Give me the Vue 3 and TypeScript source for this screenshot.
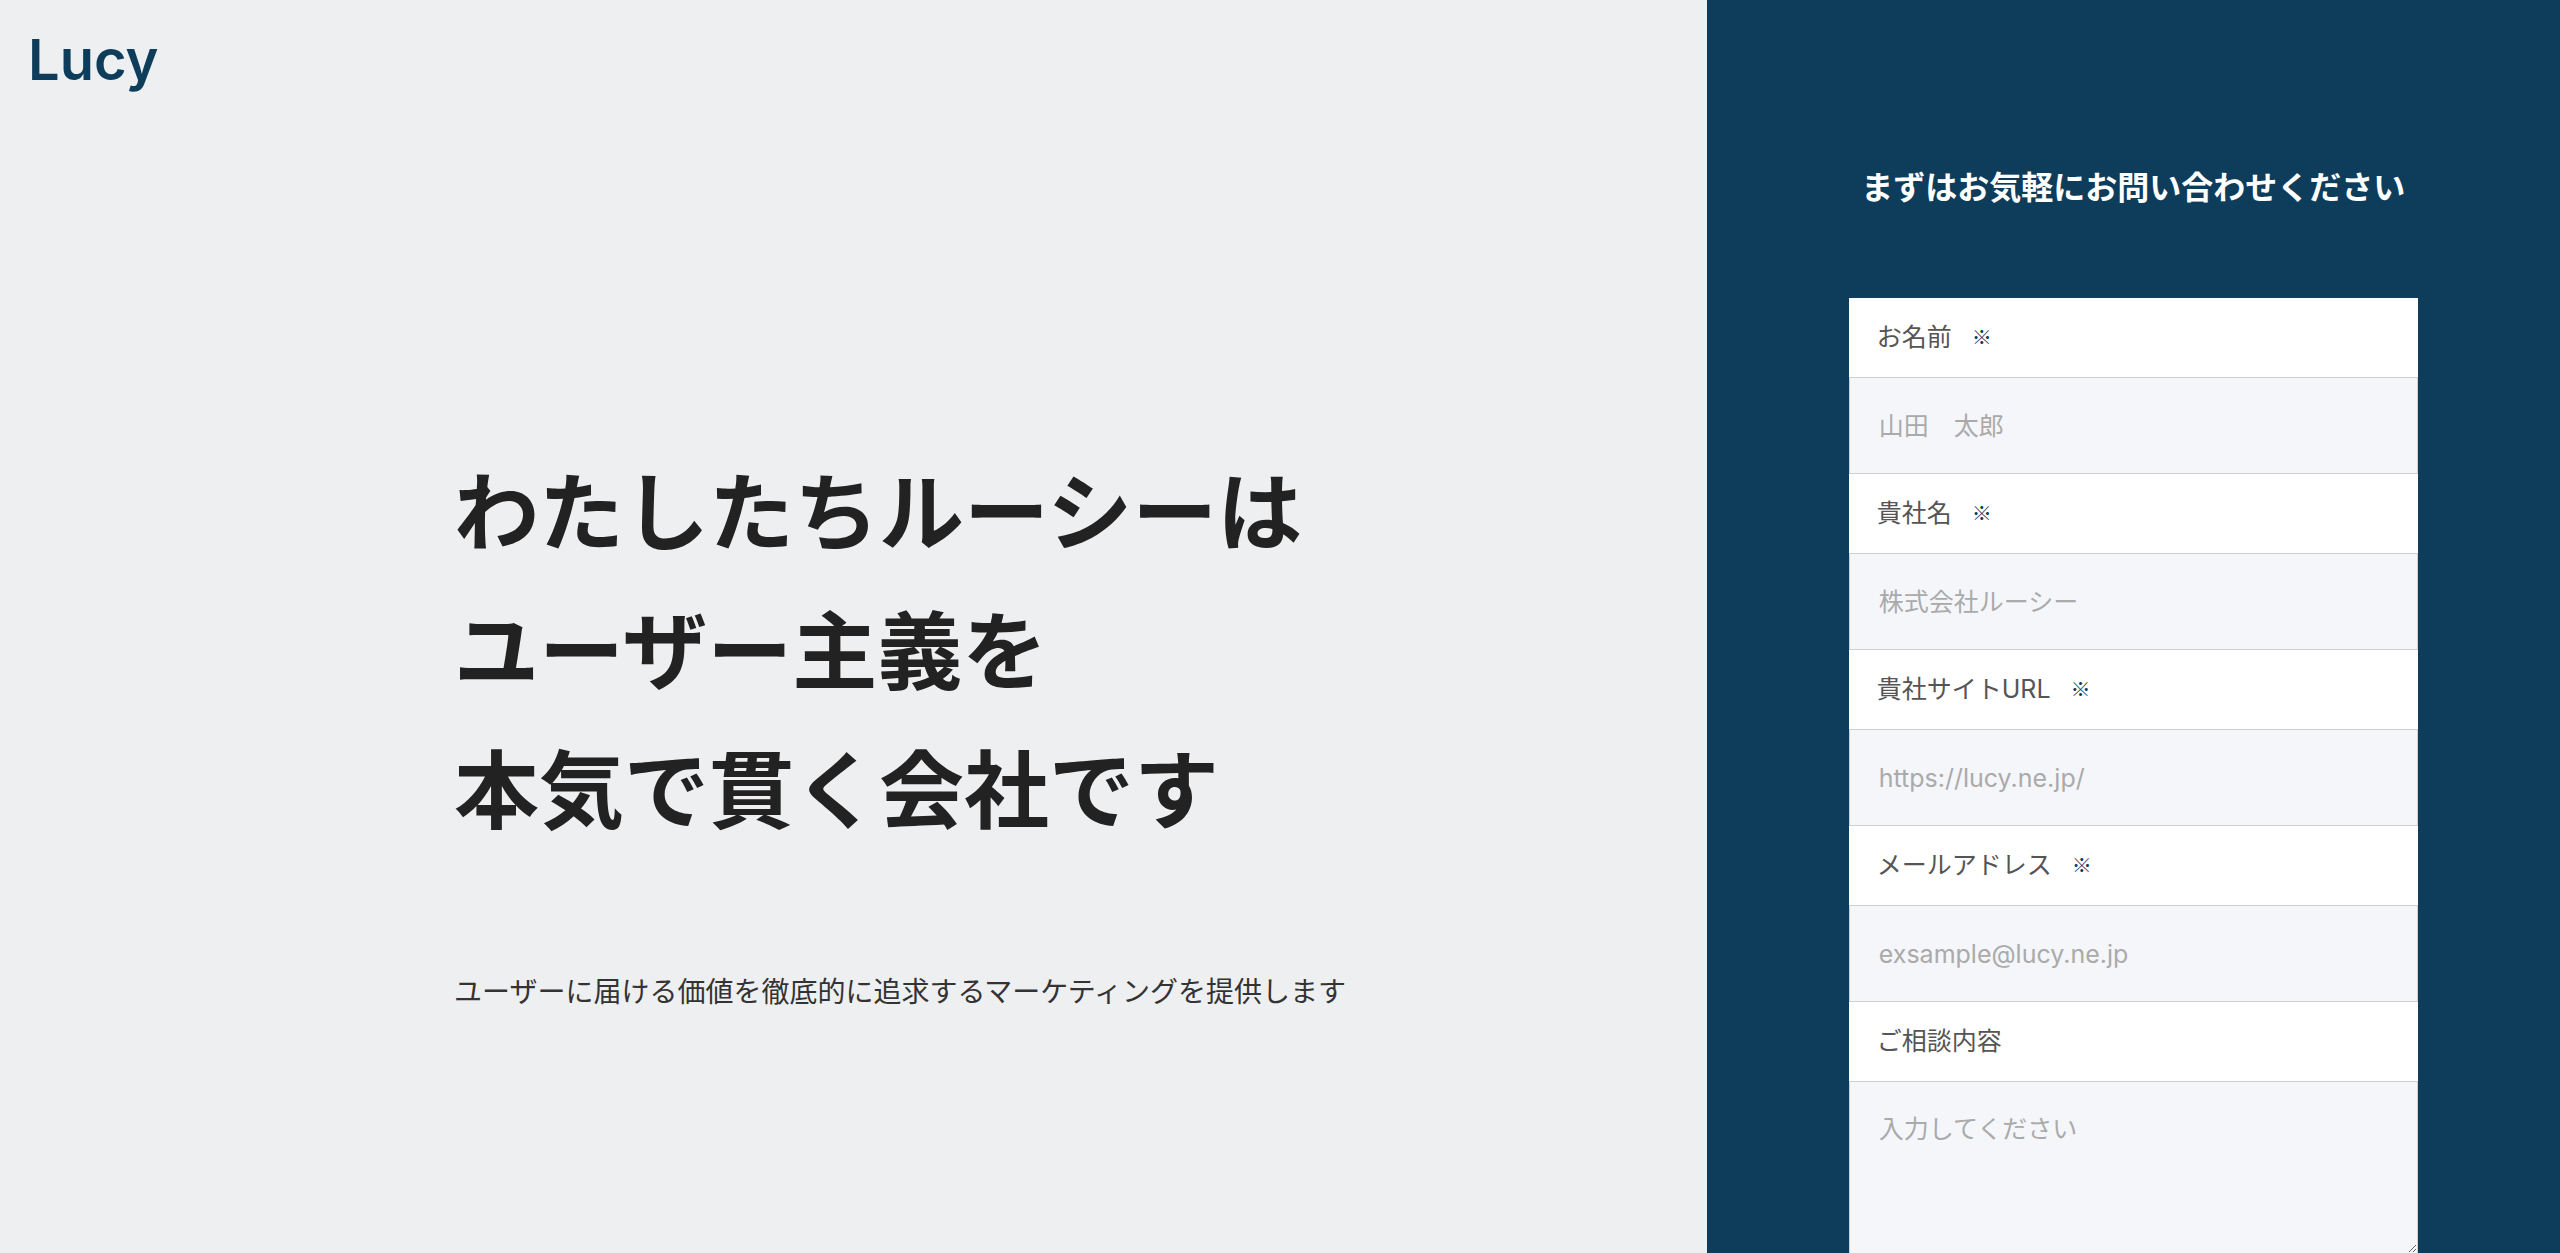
<script setup lang="ts">
interface Field {
  id: string
  label: string
  type: string
  placeholder: string
}

const headline: string[] = ['わたしたちルーシーは', 'ユーザー主義を', '本気で貫く会社です']

const fields: Field[] = [
  { id: 'name', label: 'お名前', type: 'text', placeholder: '山田　太郎' },
  { id: 'company', label: '貴社名', type: 'text', placeholder: '株式会社ルーシー' },
  { id: 'site', label: '貴社サイトURL', type: 'url', placeholder: 'https://lucy.ne.jp/' },
  { id: 'email', label: 'メールアドレス', type: 'email', placeholder: 'exsample@lucy.ne.jp' },
]
</script>

<template>
  <div class="page" lang="ja">
    <main class="hero">
      <header class="header">
        <a class="logo" href="#">Lucy</a>
      </header>
      <div class="message">
        <h1 class="headline">
          <span v-for="line in headline" :key="line" class="headline-line">{{ line }}</span>
        </h1>
        <p class="lead">ユーザーに届ける価値を徹底的に追求するマーケティングを提供します</p>
      </div>
    </main>
    <aside class="contact">
      <h2 class="contact-title">まずはお気軽にお問い合わせください</h2>
      <form class="form" @submit.prevent>
        <div v-for="field in fields" :key="field.id" class="row">
          <label class="label" :for="field.id">
            {{ field.label }}<span class="required">※</span>
          </label>
          <input
            :id="field.id"
            class="control"
            :type="field.type"
            :name="field.id"
            :placeholder="field.placeholder"
            required
          />
        </div>
        <div class="row">
          <label class="label" for="message">ご相談内容</label>
          <textarea id="message" class="control area" name="message" placeholder="入力してください"></textarea>
        </div>
      </form>
    </aside>
  </div>
</template>

<style>
body {
  margin: 0;
}
</style>

<style scoped>
.page {
  display: grid;
  grid-template-columns: 2fr 1fr;
  height: 100vh;
  overflow: hidden;
  font-family: Inter, 'Noto Sans CJK JP', sans-serif;
  color: #222;
  background: #eeeff1;
}

.header {
  display: flex;
  padding: 24px 28px 0;
}

.logo {
  font-size: 56px;
  font-weight: 600;
  line-height: 72px;
  color: #0e3d5b;
  text-decoration: none;
}

.message {
  padding: 348px 24px 0 454px;
}

.headline {
  margin: 0;
  font-size: 85px;
  font-weight: 700;
  line-height: 139px;
}

.headline-line {
  display: block;
  white-space: nowrap;
}

.lead {
  margin: 107px 0 0;
  font-size: 28px;
  line-height: 48px;
  color: #333;
  white-space: nowrap;
}

.contact {
  background: #0e3d5b;
}

.contact-title {
  margin: 164px 0 86px;
  font-size: 32px;
  font-weight: 700;
  line-height: 48px;
  text-align: center;
  white-space: nowrap;
  color: #fff;
}

.form {
  width: 66.7%;
  margin: 0 auto;
  background: #fff;
}

.label {
  display: flex;
  align-items: center;
  box-sizing: border-box;
  gap: 20px;
  height: 79px;
  padding: 0 28px 2px;
  font-size: 25px;
  line-height: 36px;
  color: #555;
}

.required {
  font-family: 'Noto Sans CJK JP', sans-serif;
  font-size: 20px;
  font-weight: 700;
  color: #0e3d5b;
}

.control {
  display: block;
  box-sizing: border-box;
  width: 100%;
  height: 97px;
  margin: 0;
  padding: 0 29px;
  border: 1px solid #ccd0d2;
  border-radius: 0;
  outline: none;
  background: #f4f6fa;
  font-family: inherit;
  font-size: 25px;
  line-height: 36px;
  color: #333;
}

.control::placeholder {
  color: #aaa;
  opacity: 1;
}

.area {
  height: 173px;
  padding: 29px;
  resize: vertical;
}
</style>
